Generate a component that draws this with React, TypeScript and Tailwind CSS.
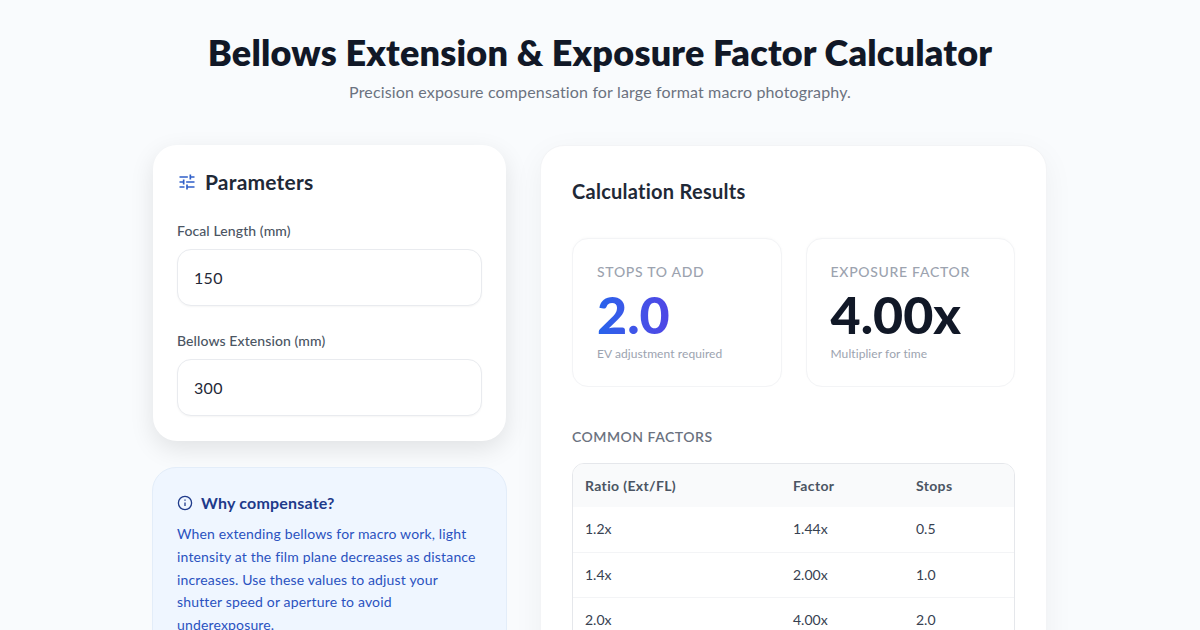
const rows = [
  { ratio: '1.2x', factor: '1.44x', stops: '0.5' },
  { ratio: '1.4x', factor: '2.00x', stops: '1.0' },
  { ratio: '2.0x', factor: '4.00x', stops: '2.0' },
]

function TuneIcon() {
  return (
    <svg width="20" height="20" viewBox="0 0 24 24" fill="#2f5fc9" className="shrink-0">
      <path d="M3 17v2h6v-2H3zM3 5v2h10V5H3zm10 16v-2h8v-2h-8v-2h-2v6h2zM7 9v2H3v2h4v2h2V9H7zm14 4v-2H11v2h10zm-6-4h2V7h4V5h-4V3h-2v6z" />
    </svg>
  )
}

function InfoIcon() {
  return (
    <svg width="16" height="16" viewBox="0 0 16 16" fill="none" stroke="#1e3a8a" strokeWidth="1.3" className="shrink-0">
      <circle cx="8" cy="8" r="6.6" />
      <path d="M8 7.4v3.6" />
      <path d="M8 4.6v1.2" />
    </svg>
  )
}

function Field({ label, value }: { label: string; value: string }) {
  return (
    <div>
      <label className="block text-sm font-medium tracking-[0.1px] text-[#4b5563] leading-5 mb-2">{label}</label>
      <input
        defaultValue={value}
        className="block w-full h-[57px] rounded-[14px] border border-[#e9ebef] bg-white px-4 text-base tracking-[0.3px] text-[#1f2937] shadow-[0_1px_2px_rgba(0,0,0,0.04)] outline-none"
      />
    </div>
  )
}

function Stat({ label, value, note, accent }: { label: string; value: string; note: string; accent?: boolean }) {
  return (
    <div className="rounded-2xl border border-[#f3f4f6] bg-white px-6 pt-[23px] h-[149px] shadow-[0_-1px_3px_rgba(0,0,0,0.02)]">
      <div className="text-sm font-medium tracking-[0.05em] text-[#9ca3af] leading-5">{label}</div>
      <div
        className={
          accent
            ? 'text-[52px] font-black leading-[60px] mt-[2px] bg-gradient-to-r from-[#2563eb] to-[#4f46e5] bg-clip-text text-transparent w-fit'
            : 'text-[52px] font-black leading-[60px] mt-[2px] text-[#111827]'
        }
      >
        {value}
      </div>
      <div className="text-xs tracking-[0.08px] text-[#9ca3af] leading-4 mt-[2px]">{note}</div>
    </div>
  )
}

export default function App() {
  return (
    <div className="h-[630px] overflow-hidden bg-[#f9fbfd] font-['Lato','Liberation_Sans',sans-serif]">
      <div className="w-[896px] mx-auto">
        <header className="text-center pt-[30px] h-[145px]">
          <h1 className="text-[36px] font-extrabold tracking-[0.2px] leading-[44px] text-[#111827]">
            Bellows Extension &amp; Exposure Factor Calculator
          </h1>
          <p className="text-base tracking-[0.15px] leading-6 mt-[6px] text-[#6b7280]">
            Precision exposure compensation for large format macro photography.
          </p>
        </header>

        <div className="flex gap-[33px] items-start">
          {/* Parameters */}
          <div className="w-[355px] shrink-0 flex flex-col gap-[26px]">
            <section className="mx-px rounded-3xl bg-white px-6 pt-[23px] h-[296px] shadow-[0_8px_24px_rgba(0,0,0,0.1)]">
              <div className="flex items-center gap-2 h-7 mb-[25px]">
                <TuneIcon />
                <h2 className="text-[21px] font-bold tracking-[0.2px] text-[#1f2937]">Parameters</h2>
              </div>
              <div className="flex flex-col gap-[25px]">
                <Field label="Focal Length (mm)" value="150" />
                <Field label="Bellows Extension (mm)" value="300" />
              </div>
            </section>

            <section className="rounded-3xl border border-[#e3edf9] bg-[#eff6ff] px-6 pt-[23px] h-[200px]">
              <div className="flex items-center gap-2 h-6 mb-2">
                <InfoIcon />
                <h3 className="text-base font-bold tracking-[0.2px] text-[#1e3a8a]">Why compensate?</h3>
              </div>
              <p className="text-sm tracking-[0.16px] leading-[22.75px] text-[#2a52c0]">
                When extending bellows for macro work, light intensity at the film plane decreases as distance
                increases. Use these values to adjust your<br />shutter speed or aperture to avoid underexposure.
              </p>
            </section>
          </div>

          {/* Results */}
          <section className="w-[507px] rounded-3xl border border-[#f3f4f6] bg-white px-[31px] pt-[31px] pb-8 shadow-[0_8px_30px_rgba(0,0,0,0.05)]">
            <h2 className="text-xl font-bold tracking-[0.26px] text-[#1f2937] leading-7">Calculation Results</h2>
            <div className="grid grid-cols-2 gap-6 mt-[33px]">
              <Stat label="STOPS TO ADD" value="2.0" note="EV adjustment required" accent />
              <Stat label="EXPOSURE FACTOR" value="4.00x" note="Multiplier for time" />
            </div>

            <h3 className="text-sm font-semibold tracking-[0.5px] text-[#6b7280] leading-5 mt-10 mb-4">COMMON FACTORS</h3>
            <div className="rounded-xl border border-[#e5e7eb] overflow-hidden">
              <table className="w-full text-sm text-left table-fixed">
                <thead className="bg-[#f9fafb]">
                  <tr className="h-[43px] text-[#4b5563] tracking-[0.35px]">
                    <th className="w-[220px] pl-3 font-bold">Ratio (Ext/FL)</th>
                    <th className="w-[123px] font-bold">Factor</th>
                    <th className="font-bold">Stops</th>
                  </tr>
                </thead>
                <tbody className="text-[#374151]">
                  {rows.map(row => (
                    <tr key={row.ratio} className="h-[45px] border-b border-[#f3f4f6]">
                      <td className="pl-3">{row.ratio}</td>
                      <td>{row.factor}</td>
                      <td>{row.stops}</td>
                    </tr>
                  ))}
                </tbody>
              </table>
            </div>
          </section>
        </div>
      </div>
    </div>
  )
}
